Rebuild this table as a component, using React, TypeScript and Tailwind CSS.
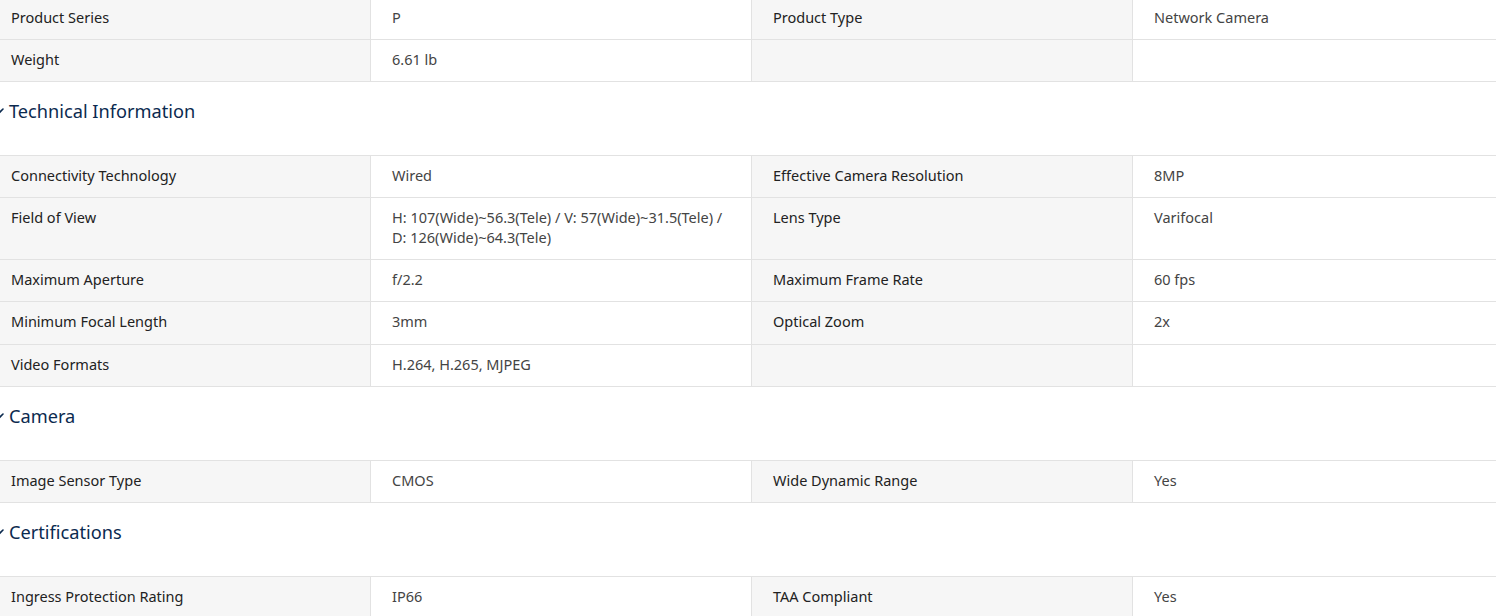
import React from "react";

type Row = [string, string, string, string];

const sections: { title?: string; rows: Row[] }[] = [
  {
    rows: [
      ["Product Series", "P", "Product Type", "Network Camera"],
      ["Weight", "6.61 lb", "", ""],
    ],
  },
  {
    title: "Technical Information",
    rows: [
      ["Connectivity Technology", "Wired", "Effective Camera Resolution", "8MP"],
      [
        "Field of View",
        "H: 107(Wide)~56.3(Tele) / V: 57(Wide)~31.5(Tele) / D: 126(Wide)~64.3(Tele)",
        "Lens Type",
        "Varifocal",
      ],
      ["Maximum Aperture", "f/2.2", "Maximum Frame Rate", "60 fps"],
      ["Minimum Focal Length", "3mm", "Optical Zoom", "2x"],
      ["Video Formats", "H.264, H.265, MJPEG", "", ""],
    ],
  },
  {
    title: "Camera",
    rows: [["Image Sensor Type", "CMOS", "Wide Dynamic Range", "Yes"]],
  },
  {
    title: "Certifications",
    rows: [["Ingress Protection Rating", "IP66", "TAA Compliant", "Yes"]],
  },
];

function Chevron() {
  return (
    <svg width="12" height="12" viewBox="0 0 12 12" className="shrink-0 text-[#0b2a4f]">
      <path d="M2 4l4 4 4-4" fill="none" stroke="currentColor" strokeWidth="1.6" strokeLinecap="round" strokeLinejoin="round" />
    </svg>
  );
}

function TableRow({ row }: { row: Row }) {
  return (
    <div className="grid grid-cols-4 border-b border-[#e2e2e2] text-[14.5px] leading-[20px]">
      <div className="bg-[#f6f6f6] border-r border-[#e2e2e2] pl-[21px] pr-3 pt-[9px] pb-[12.1px] text-[#222222]">{row[0]}</div>
      <div className="bg-white border-r border-[#e2e2e2] pl-[21px] pr-3 pt-[9px] pb-[12.1px] text-[#444444]">{row[1]}</div>
      <div className="bg-[#f6f6f6] border-r border-[#e2e2e2] pl-[21px] pr-3 pt-[9px] pb-[12.1px] text-[#222222]">{row[2]}</div>
      <div className="bg-white pl-[21px] pr-3 pt-[9px] pb-[12.1px] text-[#444444]">{row[3]}</div>
    </div>
  );
}

export default function App() {
  return (
    <div className="w-[1496px] h-[616px] overflow-hidden bg-white" style={{ fontFamily: "'Noto Sans', 'Open Sans', sans-serif" }}>
      <div className="w-[1524px] ml-[-10px] mt-[-2px]">
        {sections.map((s, i) => (
          <div key={i}>
            {s.title && (
              <div className="flex items-center gap-[4px] pt-[17px] pb-[32px] border-b border-[#e2e2e2] pl-[3px]">
                <Chevron />
                <span className="text-[18.2px] leading-[24px] text-[#0b2a4f]">{s.title}</span>
              </div>
            )}
            {s.rows.map((r, j) => (
              <TableRow key={j} row={r} />
            ))}
          </div>
        ))}
      </div>
    </div>
  );
}
